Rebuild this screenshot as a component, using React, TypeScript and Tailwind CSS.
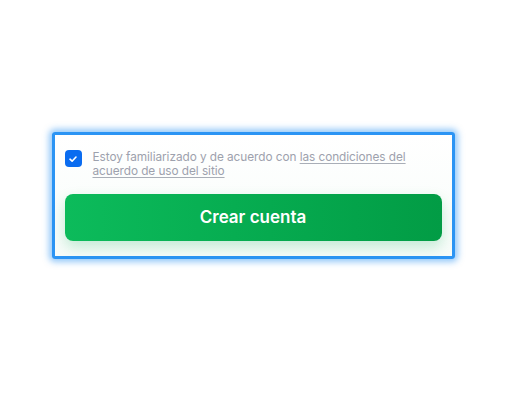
import React from "react";

const App = () => {
  const [agreed, setAgreed] = React.useState(true);

  return (
    <div
      className="w-[506px] h-[393px] bg-white flex items-start justify-center pt-[132px]"
      style={{ fontFamily: "Inter, 'Noto Sans', sans-serif" }}
    >
      <div className="w-[403px] border-[3px] border-[#2b94f4] rounded-[3px] bg-gradient-to-b from-white to-[#f7fcf9] shadow-[0_0_6px_3px_rgba(43,148,244,0.5)] pt-[15px] px-[10px] pb-[15px]">
        <label className="flex items-start gap-[11px] cursor-pointer">
          <button
            type="button"
            onClick={() => setAgreed(!agreed)}
            className={`w-[17px] h-[17px] shrink-0 rounded-[4px] flex items-center justify-center ${
              agreed ? "bg-[#0a6cf0]" : "bg-white border border-gray-300"
            }`}
          >
            {agreed && (
              <svg width="10" height="10" viewBox="0 0 10 10" fill="none">
                <path
                  d="M2 5.2 L4.1 7.2 L8 3"
                  stroke="white"
                  strokeWidth="1.6"
                  strokeLinecap="round"
                  strokeLinejoin="round"
                />
              </svg>
            )}
          </button>
          <span className="text-[11.8px] leading-[14px] tracking-[-0.05px] text-[#9da1ad]">
            Estoy familiarizado y de acuerdo con{" "}
            <a href="#" className="underline underline-offset-2 decoration-[#a9aeb7]">
              las condiciones del acuerdo de uso del sitio
            </a>
          </span>
        </label>

        <button
          type="button"
          className="mt-[16px] w-full h-[47px] rounded-[8px] bg-gradient-to-r from-[#0cbb5b] to-[#029c45] text-white text-[17px] font-semibold shadow-[0_6px_14px_rgba(6,170,80,0.22)]"
        >
          Crear cuenta
        </button>
      </div>
    </div>
  );
};

export default App;
